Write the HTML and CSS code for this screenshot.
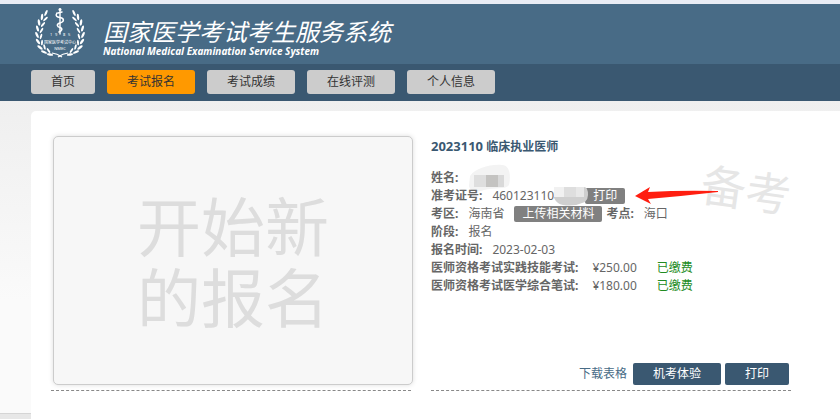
FILE: index.html
```html
<!DOCTYPE html>
<html lang="zh-CN">
<head>
    <meta charset="UTF-8">
    <meta name="viewport" content="width=device-width, initial-scale=1.0">
    <title>国家医学考试考生服务系统</title>
    <link rel="stylesheet" href="styles.css">
</head>
<body>
    <header class="header">
        <svg class="logo" viewBox="0 0 50 52" aria-hidden="true">
            <defs>
                <g id="laurel" fill="#fff">
                    <ellipse cx="11" cy="6" rx="1.1" ry="3.2" transform="rotate(25 11 6)"/>
                    <ellipse cx="7" cy="10" rx="1.2" ry="3.2" transform="rotate(5 7 10)"/>
                    <ellipse cx="10.5" cy="12" rx="1" ry="3" transform="rotate(48 10.5 12)"/>
                    <ellipse cx="4" cy="15.5" rx="1.2" ry="3.2" transform="rotate(-8 4 15.5)"/>
                    <ellipse cx="8" cy="17.5" rx="1" ry="3" transform="rotate(42 8 17.5)"/>
                    <ellipse cx="2.5" cy="21.5" rx="1.2" ry="3.2" transform="rotate(-15 2.5 21.5)"/>
                    <ellipse cx="6.5" cy="23.5" rx="1" ry="3" transform="rotate(32 6.5 23.5)"/>
                    <ellipse cx="2" cy="28" rx="1.2" ry="3.2" transform="rotate(-25 2 28)"/>
                    <ellipse cx="6" cy="29.5" rx="1" ry="2.8" transform="rotate(18 6 29.5)"/>
                    <ellipse cx="3" cy="34.5" rx="1.2" ry="3.2" transform="rotate(-35 3 34.5)"/>
                    <ellipse cx="7" cy="35.5" rx="1" ry="2.8" transform="rotate(4 7 35.5)"/>
                    <ellipse cx="5" cy="40.5" rx="1.2" ry="3.2" transform="rotate(-52 5 40.5)"/>
                    <ellipse cx="9.5" cy="40" rx="1" ry="2.8" transform="rotate(-15 9.5 40)"/>
                    <ellipse cx="9" cy="45" rx="1.2" ry="3.2" transform="rotate(-68 9 45)"/>
                    <ellipse cx="13.5" cy="43.5" rx="1" ry="2.8" transform="rotate(-35 13.5 43.5)"/>
                    <ellipse cx="15" cy="47.5" rx="1.2" ry="3.2" transform="rotate(-82 15 47.5)"/>
                    <path d="M17 46Q22 46.5 27 50" fill="none" stroke="#fff" stroke-width="1.2"/>
                </g>
            </defs>
            <use href="#laurel"/>
            <use href="#laurel" transform="translate(50 0) scale(-1 1)"/>
            <g fill="none" stroke="#fff" stroke-linecap="round">
                <path d="M25 2V27" stroke-width="1.4"/>
                <path d="M22 6C20 9 22 10 25 10.5C30 11.5 29 15 25 16C21 17 22 20 25 20.5C28 21.5 27 24 24 25" stroke-width="1.5"/>
                <path d="M23 6L27 5" stroke-width="1.5"/>
            </g>
            <circle cx="25" cy="2.5" r="1.5" fill="#fff"/>
            <g class="logo-text" fill="#fff">
                <text x="15" y="29">1</text>
                <text x="20" y="29">9</text>
                <text x="28" y="29">8</text>
                <text x="33" y="29">5</text>
                <text x="25" y="37" text-anchor="middle">国家医学考试中心</text>
                <text x="25" y="43" text-anchor="middle">NMEC</text>
            </g>
        </svg>
        <div class="brand">
            <h1>国家医学考试考生服务系统</h1>
            <p>National Medical Examination Service System</p>
        </div>
    </header>
    <nav class="nav">
        <a href="#">首页</a>
        <a href="#" class="active">考试报名</a>
        <a href="#">考试成绩</a>
        <a href="#">在线评测</a>
        <a href="#">个人信息</a>
    </nav>
    <div class="page">
        <div class="side">
            <div class="side-foot"></div>
        </div>
        <main class="main">
            <section class="item">
                <a href="#" class="new-card">开始新<br>的报名</a>
            </section>
            <section class="item">
                <h2><span class="code">2023110</span> 临床执业医师</h2>
                <div class="row">
                    <b>姓名:</b>
                    <svg class="mask-name" viewBox="0 0 42 28" aria-hidden="true">
                        <path d="M2 12C8 4 22 0 34 1C42 1 43 12 41 21C38 26 26 23 16 26C8 29 2 27 1 22Z" fill="#f3f3f3"/>
                        <path d="M6 11H18V23H6Z" fill="#dedede"/>
                        <path d="M18 11H30V23H18Z" fill="#c4c3c1"/>
                        <path d="M30 11H36V23H30Z" fill="#d9d9d9"/>
                    </svg>
                </div>
                <div class="row">
                    <b>准考证号:</b>
                    <span>460123110</span>
                    <svg class="mask-number" viewBox="0 0 34 20" aria-hidden="true">
                        <path d="M0 1H30Q34 1 34 9Q34 13 31 16Q20 21 9 19Q3 18 0 12Z" fill="#cfcfcf"/>
                        <path d="M0 1H10V11H0Z" fill="#f1f1f1"/>
                        <path d="M10 1H22V11H10Z" fill="#dedede"/>
                        <path d="M22 1H30V11H22Z" fill="#e8e8e8"/>
                    </svg>
                    <button type="button" class="tag">打印</button>
                    <svg class="arrow" viewBox="0 0 84 18" aria-hidden="true">
                        <path d="M0 9L15 0L13 5Q48 3 83 4V5Q48 9 13 12L16 17Z" fill="#ff1e10"/>
                    </svg>
                </div>
                <div class="row">
                    <b>考区:</b>
                    <span>海南省</span>
                    <button type="button" class="tag">上传相关材料</button>
                    <b class="site">考点:</b>
                    <span>海口</span>
                </div>
                <div class="row">
                    <b>阶段:</b>
                    <span>报名</span>
                </div>
                <div class="row">
                    <b>报名时间:</b>
                    <span>2023-02-03</span>
                </div>
                <div class="row">
                    <b class="exam">医师资格考试实践技能考试:</b>
                    <span>¥250.00</span>
                    <span class="paid">已缴费</span>
                </div>
                <div class="row">
                    <b class="exam">医师资格考试医学综合笔试:</b>
                    <span>¥180.00</span>
                    <span class="paid">已缴费</span>
                </div>
                <div class="stamp">备考</div>
                <div class="actions">
                    <a href="#">下载表格</a>
                    <button type="button">机考体验</button>
                    <button type="button">打印</button>
                </div>
            </section>
        </main>
    </div>
</body>
</html>
```

FILE: styles.css
```css
* {
    box-sizing: border-box;
}

body {
    display: flex;
    flex-direction: column;
    min-height: 100vh;
    margin: 0;
    border-top: 4px solid #e9ecf4;
    background: linear-gradient(#efefef 100px, #fafafa 300px);
    color: #666;
    font-family: "Noto Sans", "Noto Sans CJK SC", sans-serif;
    font-size: 12px;
    line-height: 18px;
}

h1,
h2,
p {
    margin: 0;
}

a {
    text-decoration: none;
}

button {
    border: none;
    color: #fff;
    font: inherit;
    cursor: pointer;
}

.header {
    display: flex;
    gap: 18px;
    height: 60px;
    padding: 3px 35px;
    background-color: #486b86;
    color: #fff;
}

.logo {
    width: 50px;
    height: 52px;
}

.logo-text {
    font-size: 4px;
}

.brand {
    padding-top: 12px;
    font-style: italic;
}

.brand h1 {
    font-family: "Noto Sans CJK SC", sans-serif;
    font-size: 24px;
    font-weight: 400;
    line-height: 24px;
}

.brand p {
    font-size: 10px;
    font-weight: 700;
    line-height: 16px;
}

.nav {
    display: flex;
    gap: 12px;
    padding: 6px 31px 7px;
    background-color: #3a5871;
}

.nav a {
    padding: 0 20px;
    border-radius: 3px;
    background-color: #ccc;
    color: #333;
    line-height: 24px;
}

.nav .active {
    background-color: #f90;
}

.page {
    display: grid;
    flex: 1;
    grid-template-columns: 31px 1fr;
    padding-top: 10px;
}

.side {
    display: flex;
    flex-direction: column;
    justify-content: flex-end;
}

.side-foot {
    height: 6px;
    border-top: 1px solid #d5d5d5;
    background-color: #e7e7e7;
}

.main {
    display: grid;
    grid-template-columns: 1fr 1fr;
    gap: 20px;
    align-items: start;
    padding: 25px 49px 28px 20px;
    border-top-left-radius: 5px;
    background-color: #fff;
}

.item {
    position: relative;
    display: flex;
    flex-direction: column;
    min-height: 255px;
    padding-bottom: 5px;
    border-bottom: 1px dashed #888;
}

.new-card {
    display: flex;
    flex: 1;
    align-items: center;
    justify-content: center;
    width: 100%;
    margin-left: 2px;
    padding-top: 3px;
    border: 1px solid #ccc;
    border-radius: 5px;
    box-shadow: 0 0 5px #ddd;
    background-color: #f7f7f7;
    color: #ddd;
    font-size: 64px;
    line-height: 71px;
}

.item h2 {
    margin-bottom: 12px;
    color: #3a5871;
    font-size: 12px;
    line-height: 20px;
}

.item .code {
    font-size: 13px;
}

.row {
    display: flex;
    align-items: center;
    height: 18px;
}

.row b {
    margin-right: 10px;
}

.row .exam {
    margin-right: 14px;
}

.row .site {
    margin-left: 4px;
}

.paid {
    margin-left: 20px;
    color: #228b22;
}

.tag {
    padding: 0 8px;
    border-radius: 2px;
    background-color: #808080;
    line-height: 16px;
}

.row span + .tag {
    margin-left: 10px;
}

.mask-name {
    width: 42px;
    height: 28px;
}

.mask-number {
    z-index: 1;
    width: 34px;
    height: 20px;
    margin-right: -3px;
}

.arrow {
    z-index: 1;
    width: 84px;
    height: 18px;
    margin-left: 10px;
}

.stamp {
    position: absolute;
    top: 24px;
    right: 0;
    color: #e6e6e6;
    font-size: 45px;
    line-height: 60px;
    transform: rotate(8deg);
}

.actions {
    display: flex;
    gap: 4px;
    align-items: center;
    justify-content: flex-end;
    margin-top: auto;
    padding-right: 2px;
}

.actions a {
    margin-right: 2px;
    color: #486b86;
}

.actions button {
    padding: 0 20px;
    border-radius: 2px;
    background-color: #3a5871;
    line-height: 22px;
}
```
